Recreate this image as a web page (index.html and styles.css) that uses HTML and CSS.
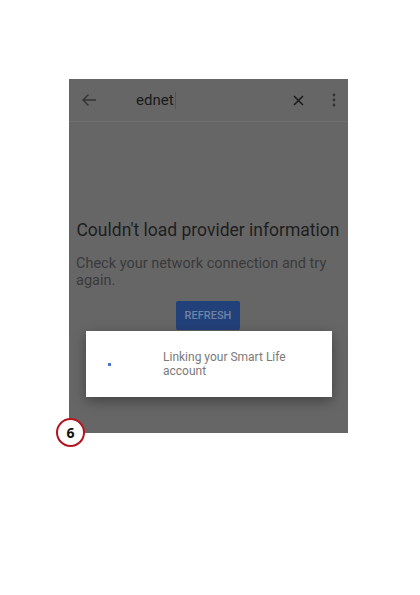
FILE: index.html
```html
<!DOCTYPE html>
<html lang="en">
<head>
  <meta charset="UTF-8">
  <title>Linking account</title>
  <link rel="stylesheet" href="styles.css">
</head>
<body>
  <div class="page">
    <div class="phone">
      <div class="search-bar">
        <svg class="icon back" width="16" height="16" viewBox="0 0 16 16">
          <path d="M15 8H2M7.5 2.5L2 8l5.5 5.5" fill="none" stroke="#333" stroke-width="1.4"/>
        </svg>
        <span class="query">ednet<span class="cursor"></span></span>
        <svg class="icon close" width="11" height="11" viewBox="0 0 11 11">
          <path d="M1 1l9 9M10 1L1 10" fill="none" stroke="#1c1c1c" stroke-width="1.6"/>
        </svg>
        <svg class="icon more" width="4" height="14" viewBox="0 0 4 14">
          <circle cx="2" cy="2" r="1.4" fill="#333"/>
          <circle cx="2" cy="7" r="1.4" fill="#333"/>
          <circle cx="2" cy="12" r="1.4" fill="#333"/>
        </svg>
      </div>

      <div class="error">
        <h2>Couldn't load provider information</h2>
        <p>Check your network connection and try again.</p>
        <div class="refresh">REFRESH</div>
      </div>

      <div class="dialog">
        <span class="spinner"></span>
        <span class="dialog-text">Linking your Smart Life account</span>
      </div>
    </div>
    <div class="step">6</div>
  </div>
</body>
</html>
```

FILE: styles.css
```css
body { margin: 0; min-height: 595px; background: #fff; font-family: Roboto, "Liberation Sans", sans-serif; }
.page { padding: 79px 0 0 69px; }
.phone { position: relative; width: 279px; height: 354px; background: #666; }

.search-bar { display: flex; align-items: center; height: 42px; border-bottom: 1px solid #707070; }
.icon { flex: none; }
.back { margin-left: 12px; }
.query { flex: 1; margin-left: 39px; font-size: 15px; color: #1a1a1a; display: flex; align-items: center; }
.cursor { display: inline-block; width: 1px; height: 17px; background: #3355aa; margin-left: 1px; }
.close { margin-right: 28px; }
.more { margin-right: 12px; }

.error { padding: 98px 8px 0 7px; }
.error h2 { margin: 0; font-size: 17.5px; font-weight: 400; color: #1e1e1e; text-align: center; white-space: nowrap; }
.error p { margin: 15px 0 0; font-size: 14.5px; line-height: 17px; color: #3a3a3a; }
.refresh { width: 64px; height: 29px; margin: 12px auto 0; background: #22407a; color: #6d84a8; font-size: 11px; font-weight: 500; display: flex; align-items: center; justify-content: center; border-radius: 2px; }

.dialog { position: absolute; left: 17px; top: 252px; width: 246px; height: 66px; background: #fff; box-shadow: 0 4px 12px rgba(0,0,0,0.35); display: flex; align-items: center; }
.spinner { width: 3px; height: 3px; background: #4a73c9; margin-left: 22px; }
.dialog-text { margin-left: 52px; width: 124px; font-size: 12px; line-height: 14px; color: #7a7a7a; }

.step { position: relative; width: 25px; height: 25px; margin: -15px 0 0 -13px; border: 2.5px solid #b3141f; border-radius: 50%; background: #fff; color: #111; font-weight: 700; font-size: 14px; display: flex; align-items: center; justify-content: center; font-family: "Open Sans", sans-serif; }
```
